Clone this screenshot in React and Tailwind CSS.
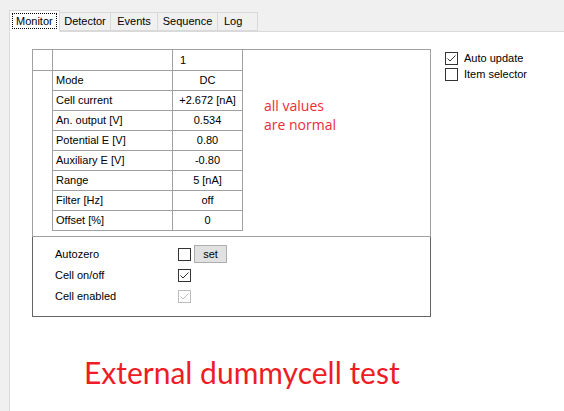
import React from "react";

const rows = [
  ["Mode", "DC"],
  ["Cell current", "+2.672 [nA]"],
  ["An. output [V]", "0.534"],
  ["Potential E [V]", "0.80"],
  ["Auxiliary E [V]", "-0.80"],
  ["Range", "5 [nA]"],
  ["Filter [Hz]", "off"],
  ["Offset [%]", "0"],
];

function Check({ checked, disabled }) {
  return (
    <div
      className={
        "w-[13px] h-[13px] border bg-white flex items-center justify-center shrink-0 " +
        (disabled ? "border-[#bcbcbc]" : "border-[#333333]")
      }
    >
      {checked && (
        <svg width="11" height="11" viewBox="0 0 11 11">
          <polyline
            points="1.5,5.5 4,8 9.5,2.5"
            fill="none"
            stroke={disabled ? "#bcbcbc" : "#333333"}
            strokeWidth="1"
          />
        </svg>
      )}
    </div>
  );
}

export default function App() {
  const font = { fontFamily: '"Liberation Sans", Arial, sans-serif' };
  return (
    <div
      className="w-[564px] h-[411px] bg-[#f0f0f0] overflow-hidden text-[11px] text-black pt-[10px]"
      style={font}
    >
      {/* tabs */}
      <div className="flex items-end pl-[9px] h-[21px]">
        <div className="relative z-10 w-[51px] h-[22px] bg-white border border-[#d9d9d9] border-b-white -mb-px flex items-start pt-[2px] pl-[2px]">
          <div className="border border-dotted border-black px-[3px] h-[16px] flex items-center leading-none">
            Monitor
          </div>
        </div>
        <div className="w-[51px] h-[19px] border border-l-0 border-[#d9d9d9] flex items-center justify-center leading-none">
          Detector
        </div>
        <div className="w-[47px] h-[19px] border border-l-0 border-[#d9d9d9] flex items-center justify-center leading-none">
          Events
        </div>
        <div className="w-[60px] h-[19px] border border-l-0 border-[#d9d9d9] flex items-center justify-center leading-none">
          Sequence
        </div>
        <div className="w-[40px] h-[19px] border border-l-0 border-[#d9d9d9] flex items-center pl-[6px] leading-none">
          Log
        </div>
      </div>
      {/* page */}
      <div className="ml-[9px] h-[400px] bg-white border-t border-l border-[#d9d9d9] pt-[17px] pl-[22px]">
        <div className="flex">
          <div className="w-[399px]">
            {/* grid */}
            <div className="h-[188px] border border-[#a0a0a0] flex">
              <div className="flex flex-col">
                {/* header row */}
                <div className="flex h-[21px] border-b border-[#a0a0a0]">
                  <div className="w-[20px] border-r border-[#a0a0a0]" />
                  <div className="w-[120px] border-r border-[#a0a0a0]" />
                  <div className="w-[70px] border-r border-[#a0a0a0] flex items-center pl-[7px]">1</div>
                </div>
                {rows.map(([k, v]) => (
                  <div key={k} className="flex h-[20px]">
                    <div className="w-[20px] border-r border-[#a0a0a0]" />
                    <div className="w-[120px] border-r border-b border-[#a0a0a0] flex items-center pl-[3px]">
                      {k}
                    </div>
                    <div className="w-[70px] border-r border-b border-[#a0a0a0] flex items-center justify-center">
                      {v}
                    </div>
                  </div>
                ))}
              </div>
              <div
                className="ml-[21px] pt-[46px] text-[14px] leading-[19px] text-[#ee2b3b]"
                style={{ fontFamily: '"Open Sans", sans-serif' }}
              >
                <div>all values</div>
                <div>are normal</div>
              </div>
            </div>
            {/* panel */}
            <div className="h-[80px] border border-t-0 border-[#646464] pt-[6px] pl-[22px]">
              <div className="flex items-center h-[22px]">
                <div className="w-[123px]">Autozero</div>
                <Check />
                <div className="ml-[3px] w-[33px] h-[18px] bg-[#e1e1e1] border border-[#adadad] flex items-center justify-center">
                  set
                </div>
              </div>
              <div className="flex items-center h-[21px]">
                <div className="w-[123px]">Cell on/off</div>
                <Check checked />
              </div>
              <div className="flex items-center h-[21px]">
                <div className="w-[123px]">Cell enabled</div>
                <Check checked disabled />
              </div>
            </div>
          </div>
          <div className="ml-[14px] mt-[1px]">
            <div className="flex items-center h-[16px]">
              <Check checked />
              <span className="ml-[6px]">Auto update</span>
            </div>
            <div className="flex items-center h-[16px]">
              <Check />
              <span className="ml-[6px]">Item selector</span>
            </div>
          </div>
        </div>
        <div
          className="mt-[37px] ml-[52px] text-[30px] leading-[37px] text-[#ee1c25]"
          style={{ fontFamily: "Lato, sans-serif" }}
        >
          External dummycell test
        </div>
      </div>
    </div>
  );
}
